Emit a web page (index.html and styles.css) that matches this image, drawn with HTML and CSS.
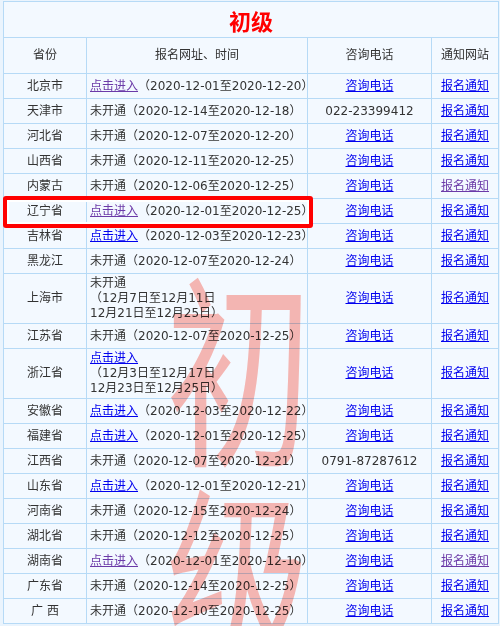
FILE: index.html
```html
<!DOCTYPE html>
<html lang="zh">
<head>
<meta charset="utf-8">
<link rel="stylesheet" href="styles.css">
</head>
<body>
<div class="wrap">
<table class="tbl">
  <colgroup><col class="c1"><col class="c2"><col class="c3"><col class="c4"></colgroup>
  <tr class="title-row"><td colspan="4" class="title">初级</td></tr>
  <tr class="head"><td>省份</td><td>报名网址、时间</td><td>咨询电话</td><td>通知网站</td></tr>
  <tr><td>北京市</td><td class="l"><a class="v">点击进入</a>（2020-12-01至2020-12-20）</td><td><a>咨询电话</a></td><td><a>报名通知</a></td></tr>
  <tr><td>天津市</td><td class="l">未开通（2020-12-14至2020-12-18）</td><td>022-23399412</td><td><a>报名通知</a></td></tr>
  <tr><td>河北省</td><td class="l">未开通（2020-12-07至2020-12-20）</td><td><a>咨询电话</a></td><td><a>报名通知</a></td></tr>
  <tr><td>山西省</td><td class="l">未开通（2020-12-11至2020-12-25）</td><td><a>咨询电话</a></td><td><a>报名通知</a></td></tr>
  <tr><td>内蒙古</td><td class="l">未开通（2020-12-06至2020-12-25）</td><td><a>咨询电话</a></td><td><a class="v">报名通知</a></td></tr>
  <tr><td>辽宁省</td><td class="l"><a class="v">点击进入</a>（2020-12-01至2020-12-25）</td><td><a>咨询电话</a></td><td><a>报名通知</a></td></tr>
  <tr><td>吉林省</td><td class="l"><a>点击进入</a>（2020-12-03至2020-12-23）</td><td><a>咨询电话</a></td><td><a>报名通知</a></td></tr>
  <tr><td>黑龙江</td><td class="l">未开通（2020-12-07至2020-12-24）</td><td><a>咨询电话</a></td><td><a>报名通知</a></td></tr>
  <tr><td>上海市</td><td class="l">未开通<br>（12月7日至12月11日<br>12月21日至12月25日）</td><td><a>咨询电话</a></td><td><a>报名通知</a></td></tr>
  <tr><td>江苏省</td><td class="l">未开通（2020-12-07至2020-12-25）</td><td><a>咨询电话</a></td><td><a>报名通知</a></td></tr>
  <tr><td>浙江省</td><td class="l"><a>点击进入</a><br>（12月3日至12月17日<br>12月23日至12月25日）</td><td><a>咨询电话</a></td><td><a>报名通知</a></td></tr>
  <tr><td>安徽省</td><td class="l"><a>点击进入</a>（2020-12-03至2020-12-22）</td><td><a>咨询电话</a></td><td><a>报名通知</a></td></tr>
  <tr><td>福建省</td><td class="l"><a>点击进入</a>（2020-12-01至2020-12-25）</td><td><a>咨询电话</a></td><td><a>报名通知</a></td></tr>
  <tr><td>江西省</td><td class="l">未开通（2020-12-07至2020-12-21）</td><td>0791-87287612</td><td><a>报名通知</a></td></tr>
  <tr><td>山东省</td><td class="l"><a>点击进入</a>（2020-12-01至2020-12-21）</td><td><a>咨询电话</a></td><td><a>报名通知</a></td></tr>
  <tr><td>河南省</td><td class="l">未开通（2020-12-15至2020-12-24）</td><td><a>咨询电话</a></td><td><a>报名通知</a></td></tr>
  <tr><td>湖北省</td><td class="l">未开通（2020-12-12至2020-12-25）</td><td><a>咨询电话</a></td><td><a>报名通知</a></td></tr>
  <tr><td>湖南省</td><td class="l"><a class="v">点击进入</a>（2020-12-01至2020-12-10）</td><td><a>咨询电话</a></td><td><a class="v">报名通知</a></td></tr>
  <tr><td>广东省</td><td class="l">未开通（2020-12-14至2020-12-25）</td><td><a>咨询电话</a></td><td><a>报名通知</a></td></tr>
  <tr><td>广&nbsp;西</td><td class="l">未开通（2020-12-10至2020-12-25）</td><td><a>咨询电话</a></td><td><a>报名通知</a></td></tr>
</table>
<div class="watermark">初<br>级</div>
<div class="mark"></div>
</div>
</body>
</html>
```
FILE: styles.css
```css
html, body {
  margin: 0;
  padding: 0;
  background: #eaf4fd;
  overflow: hidden;
}
body {
  font-family: "DejaVu Sans", "Noto Sans CJK SC", sans-serif;
  font-size: 12px;
  color: #333;
}
.wrap {
  position: relative;
  width: 500px;
  height: 626px;
  overflow: hidden;
}
.tbl {
  margin: 1px 0 0 3px;
  width: 495px;
  border-collapse: collapse;
  table-layout: fixed;
  background: #f3f9ff;
}
.c1 { width: 83px; }
.c2 { width: 221px; }
.c3 { width: 124px; }
.c4 { width: 67px; }
.tbl td {
  border: 1px solid #b6daf6;
  text-align: center;
  vertical-align: middle;
  padding: 2px 3px;
  height: 20px;
  line-height: 15px;
  white-space: nowrap;
}
.tbl td.l { text-align: left; }
.title-row td.title {
  height: 35px;
  padding: 0;
  font-size: 22px;
  font-weight: bold;
  color: #ff0000;
  font-family: "Noto Sans CJK SC", sans-serif;
  line-height: 30px;
}
.head td { height: 31px; }
a {
  color: #0000ee;
  text-decoration: underline;
  cursor: pointer;
}
a.v { color: #6b3aa8; }
.watermark {
  position: absolute;
  left: 166px;
  top: 255px;
  font-family: "Noto Sans CJK SC", sans-serif;
  font-size: 146px;
  line-height: 152px;
  color: #ffbab2;
  mix-blend-mode: multiply;
  pointer-events: none;
  transform: scaleY(1.4);
  transform-origin: top left;
}
.mark {
  position: absolute;
  left: 3px;
  top: 196px;
  width: 302px;
  height: 24px;
  border: 4px solid #ff0000;
  border-radius: 3px;
  box-shadow: inset 0 0 0 2px #ffffff;
}
```
